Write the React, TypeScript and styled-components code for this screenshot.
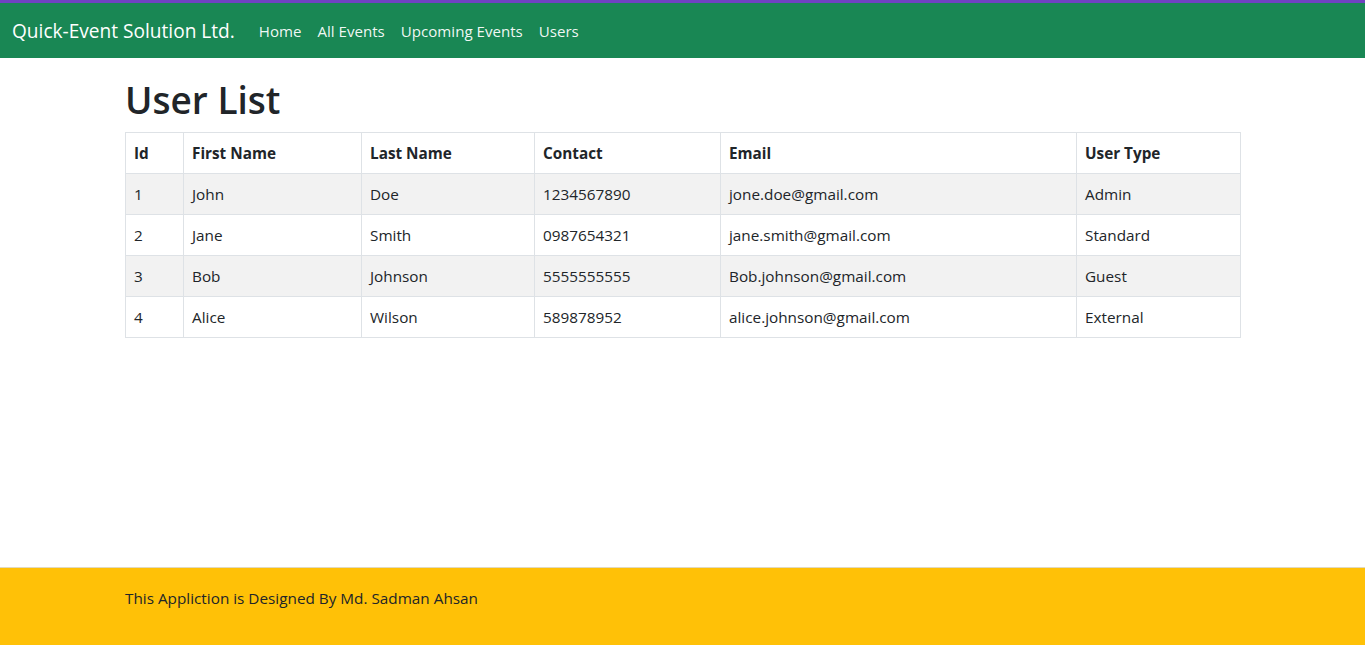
import React from "react";
import styled, { createGlobalStyle } from "styled-components";

const GlobalStyle = createGlobalStyle`
  * { box-sizing: border-box; }
  body {
    margin: 0;
    font-family: "Segoe UI", "Open Sans", sans-serif;
    font-size: 15.3px;
    line-height: 24px;
    color: #212529;
    background: #fff;
  }
`;

const Page = styled.div`
  min-height: 100vh;
  display: flex;
  flex-direction: column;
`;

const Navbar = styled.nav`
  border-top: 3px solid #6f42c1;
  background: #198754;
  height: 58px;
  display: flex;
  align-items: center;
  padding: 0 12px;
`;

const Brand = styled.a`
  color: #fff;
  font-size: 19.1px;
  line-height: 30px;
  margin-right: 16px;
  text-decoration: none;
`;

const NavLinks = styled.ul`
  display: flex;
  list-style: none;
  margin: 0;
  padding: 0;
`;

const NavLink = styled.li`
  color: rgba(255, 255, 255, 0.94);
  font-size: 15.1px;
  padding: 8px;
`;

const Container = styled.main`
  width: 1115px;
  margin: 0 auto;
  padding-top: 18px;
  flex: 1;
`;

const Title = styled.h1`
  font-size: 37px;
  font-weight: 600;
  line-height: 48px;
  margin: 0 0 8px;
`;

const Table = styled.table`
  width: 100%;
  border-collapse: collapse;
  table-layout: fixed;
`;

const Cell = styled.td<{ $head?: boolean }>`
  border: 1px solid #dee2e6;
  padding: 8px;
  text-align: left;
  font-weight: ${(p) => (p.$head ? 700 : 400)};
`;

const Row = styled.tr<{ $striped?: boolean }>`
  background: ${(p) => (p.$striped ? "#f2f2f2" : "#fff")};
`;

const Footer = styled.footer`
  background: #ffc107;
  border-top: 1px solid #e0d9c0;
  padding: 18px 0 19px;
`;

const FooterText = styled.p`
  width: 1115px;
  margin: 0 auto 16px;
`;

const widths = [58, 178, 173, 186, 356, 164];
const heads = ["Id", "First Name", "Last Name", "Contact", "Email", "User Type"];

const users = [
  ["1", "John", "Doe", "1234567890", "jone.doe@gmail.com", "Admin"],
  ["2", "Jane", "Smith", "0987654321", "jane.smith@gmail.com", "Standard"],
  ["3", "Bob", "Johnson", "5555555555", "Bob.johnson@gmail.com", "Guest"],
  ["4", "Alice", "Wilson", "589878952", "alice.johnson@gmail.com", "External"],
];

export default function App() {
  return (
    <>
      <GlobalStyle />
      <Page>
        <Navbar>
          <Brand>Quick-Event Solution Ltd.</Brand>
          <NavLinks>
            <NavLink>Home</NavLink>
            <NavLink>All Events</NavLink>
            <NavLink>Upcoming Events</NavLink>
            <NavLink>Users</NavLink>
          </NavLinks>
        </Navbar>

        <Container>
          <Title>User List</Title>
          <Table>
            <colgroup>
              {widths.map((w, i) => (
                <col key={i} style={{ width: w }} />
              ))}
            </colgroup>
            <thead>
              <Row>
                {heads.map((h) => (
                  <Cell as="th" $head key={h}>{h}</Cell>
                ))}
              </Row>
            </thead>
            <tbody>
              {users.map((u, i) => (
                <Row key={u[0]} $striped={i % 2 === 0}>
                  {u.map((v, j) => (
                    <Cell key={j}>{v}</Cell>
                  ))}
                </Row>
              ))}
            </tbody>
          </Table>
        </Container>

        <Footer>
          <FooterText>This Appliction is Designed By Md. Sadman Ahsan</FooterText>
        </Footer>
      </Page>
    </>
  );
}
